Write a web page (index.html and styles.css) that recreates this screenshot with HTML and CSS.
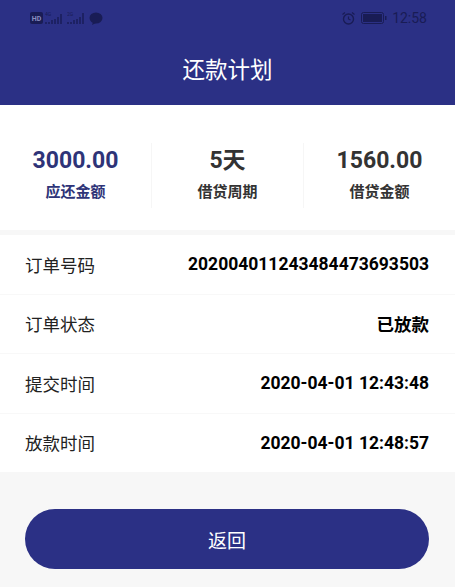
FILE: index.html
```html
<!DOCTYPE html>
<html lang="zh">
<head>
<meta charset="utf-8">
<title>还款计划</title>
<link rel="stylesheet" href="styles.css">
</head>
<body>
<div class="page">
  <header class="header">
    <div class="status">
      <div class="status-group">
        <svg class="ic-hd" width="13" height="12" viewBox="0 0 13 12"><rect width="13" height="12" rx="2" fill="#191c55"/><text x="6.5" y="9" text-anchor="middle" class="hd-text">HD</text></svg>
        <svg width="20" height="14" viewBox="0 0 20 14"><text x="0" y="5" class="sig-text">4G</text><path d="M1 13v-2M4 13v-2M7 13v-4M10 13v-5M13 13v-7M16 13V3" stroke="#191c55" stroke-width="1.4" fill="none"/></svg>
        <svg width="20" height="14" viewBox="0 0 20 14"><text x="0" y="5" class="sig-text">2G</text><path d="M1 13v-2M4 13v-2M7 13v-4M10 13v-5M13 13v-7M16 13V2" stroke="#191c55" stroke-width="1.4" fill="none"/></svg>
        <svg width="14" height="13" viewBox="0 0 14 13"><ellipse cx="7" cy="6" rx="6.5" ry="5.5" fill="#191c55"/><path d="M4 10l-1 3 4-2z" fill="#191c55"/></svg>
      </div>
      <div class="status-group right">
        <svg width="15" height="15" viewBox="0 0 15 15"><circle cx="7.5" cy="8" r="5" fill="none" stroke="#191c55" stroke-width="1.4"/><path d="M7.5 5.500V8l2 1M1.500 3.500l2.500-2M13.500 3.500l-2.500-2" fill="none" stroke="#191c55" stroke-width="1.200"/></svg>
        <svg class="battery" width="26" height="12" viewBox="0 0 26 12"><rect x="0.500" y="0.500" width="22" height="11" rx="2" fill="none" stroke="#191c55"/><rect x="2" y="2" width="19" height="8" fill="#191c55"/><rect x="24" y="4" width="1.500" height="4" fill="#191c55"/></svg>
        <span class="clock">12:58</span>
      </div>
    </div>
    <h1 class="title">还款计划</h1>
  </header>

  <section class="summary">
    <div class="stat accent">
      <div class="stat-value">3000.00</div>
      <div class="stat-label">应还金额</div>
    </div>
    <div class="stat">
      <div class="stat-value">5天</div>
      <div class="stat-label">借贷周期</div>
    </div>
    <div class="stat">
      <div class="stat-value">1560.00</div>
      <div class="stat-label">借贷金额</div>
    </div>
  </section>

  <section class="details">
    <div class="row"><span class="row-key">订单号码</span><span class="row-val">202004011243484473693503</span></div>
    <div class="row"><span class="row-key">订单状态</span><span class="row-val">已放款</span></div>
    <div class="row"><span class="row-key">提交时间</span><span class="row-val">2020-04-01 12:43:48</span></div>
    <div class="row"><span class="row-key">放款时间</span><span class="row-val">2020-04-01 12:48:57</span></div>
  </section>

  <div class="actions">
    <button class="back" type="button">返回</button>
  </div>
</div>
</body>
</html>
```
FILE: styles.css
```css
* { box-sizing: border-box; }
html, body { margin: 0; padding: 0; }
body {
  width: 455px;
  height: 587px;
  overflow: hidden;
  background: #f7f7f7;
  font-family: Roboto, "Noto Sans CJK SC", sans-serif;
}
.page { display: flex; flex-direction: column; height: 587px; }
.header {
  height: 105px;
  background: #2b3085;
  display: flex;
  flex-direction: column;
}
.status {
  height: 36px;
  padding: 0 28px 0 30px;
  display: flex;
  align-items: center;
  justify-content: space-between;
}
.status-group { display: flex; align-items: center; gap: 2px; }
.status-group.right { gap: 5px; }
.hd-text { font: 700 7px Roboto, sans-serif; fill: #8a8fc0; }
.sig-text { font: 5px Roboto, sans-serif; fill: #191c55; }
.clock { font-size: 14px; color: #191c55; }
.title {
  margin: 0;
  text-align: center;
  font-size: 22.500px;
  font-weight: 400;
  line-height: 33px;
  color: #fff;
  padding-top: 18px;
  box-sizing: content-box;
}
.summary {
  height: 125px;
  background: #fff;
  display: flex;
  align-items: flex-start;
  padding-top: 38px;
  margin-bottom: 5px;
}
.stat {
  flex: 1;
  height: 65px;
  display: flex;
  flex-direction: column;
  align-items: center;
  justify-content: center;
  gap: 6px;
  padding-bottom: 4px;
  border-left: 1px solid #f6f6f6;
  color: #333;
}
.stat:first-child { border-left: 0; }
.stat.accent { color: #2e3478; }
.stat-value { font-size: 23px; font-weight: 700; line-height: 30px; }
.stat-label { font-size: 15px; font-weight: 700; line-height: 20px; }
.details {
  background: #f8f8f8;
  display: flex;
  flex-direction: column;
  gap: 1px;
}
.row {
  height: 58.500px;
  background: #fff;
  padding: 0 26px 0 25px;
  display: flex;
  align-items: center;
  justify-content: space-between;
  font-size: 17.500px;
  color: #111;
}
.row-key { font-weight: 400; color: #222; }
.row-val { font-weight: 700; color: #000; }
.actions { flex: 1; padding: 37px 26px 0 25px; }
.back {
  width: 100%;
  height: 60px;
  border: 0;
  border-radius: 30px;
  background: #2b3085;
  color: #fff;
  font: 400 19px "Noto Sans CJK SC", sans-serif;
}
```
